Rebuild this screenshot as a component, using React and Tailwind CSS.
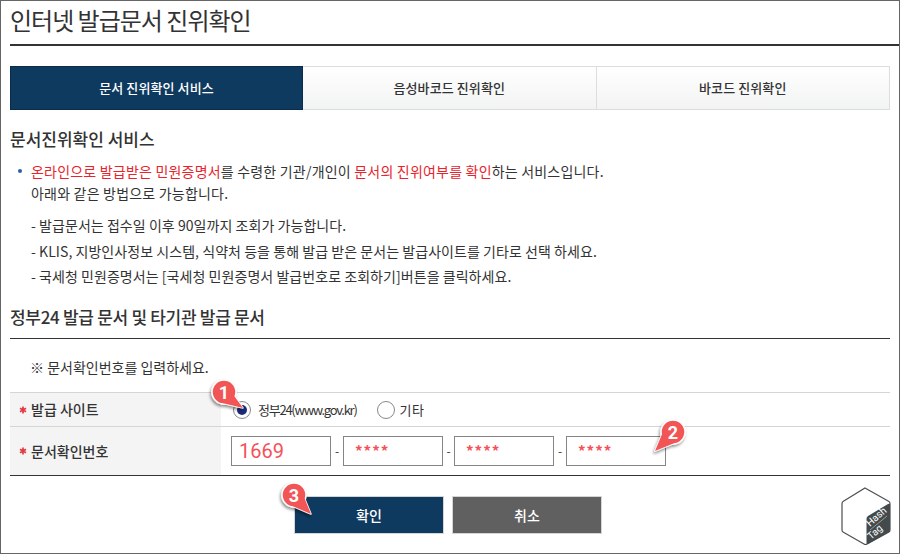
import React from 'react';

const FONT = "font-['Noto_Sans_CJK_KR','Noto_Sans',sans-serif]";

// red numbered callout with a pointer, drawn over the form
function Callout({ className, num, tip }) {
  return (
    <svg className={`absolute z-10 ${className}`} width="60" height="60" viewBox="0 0 60 60">
      <defs>
        <filter id={`shadow${num}`} x="-30%" y="-30%" width="160%" height="160%">
          <feDropShadow dx="-1" dy="2" stdDeviation="1.5" floodColor="#000" floodOpacity="0.45" />
        </filter>
      </defs>
      <g filter={`url(#shadow${num})`}>
        <path d={tip} fill="#f25555" stroke="#fff" strokeWidth="1.5" strokeLinejoin="round" />
        <circle cx="30" cy="30" r="12" fill="#f25555" stroke="#fff" strokeWidth="1.5" />
        <path d={tip} fill="#f25555" />
      </g>
      <text x="30" y="36.5" textAnchor="middle" fontSize="18" fontWeight="700" fill="#fff" fontFamily="Roboto, sans-serif">{num}</text>
    </svg>
  );
}

function Star() {
  return (
    <svg className="mr-[4px] shrink-0" width="8" height="8" viewBox="0 0 8 8">
      <path d="M4 0.5V7.5M1 2.2L7 5.8M7 2.2L1 5.8" stroke="#e33a44" strokeWidth="1.7" />
    </svg>
  );
}

function CodeInput({ children, className = '' }) {
  return (
    <div className={`w-[100px] h-[30px] border border-[#858585] bg-white flex items-center text-[#f4525a] ${className}`}>
      {children}
    </div>
  );
}

export default function App() {
  return (
    <div className={`relative w-[900px] h-[554px] overflow-hidden bg-white border border-[#666] text-[#333] ${FONT}`}>
      <h1 className="pl-[9px] h-[43px] text-[24px] leading-[36px] tracking-[-1px] text-[#333] pt-px">인터넷 발급문서 진위확인</h1>
      <div className="ml-[9px] h-[2px] bg-[#333]" />

      <div className="mx-[9px] mt-[20px] flex h-[44px] text-[13px] font-medium tracking-[0.1px]">
        <div className="w-[293px] bg-[#0f3a60] border border-[#0a2c4a] text-white flex items-center justify-center">문서 진위확인 서비스</div>
        <div className="flex-1 border border-l-0 border-[#ddd] bg-gradient-to-b from-white to-[#f2f3f3] flex items-center justify-center">음성바코드 진위확인</div>
        <div className="flex-1 border border-l-0 border-[#ddd] bg-gradient-to-b from-white to-[#f2f3f3] flex items-center justify-center">바코드 진위확인</div>
      </div>

      <h2 className="pl-[9px] mt-[17px] text-[17px] leading-[24px] font-medium">문서진위확인 서비스</h2>

      <div className="mt-[9px] pl-[30px] text-[14px] leading-[22px] tracking-[0.2px] relative">
        <span className="absolute left-[17px] top-[9px] w-[4px] h-[4px] rounded-full bg-[#2f5ea8]" />
        <p>
          <span className="text-[#e8232b]">온라인으로 발급받은 민원증명서</span>를 수령한 기관/개인이{' '}
          <span className="text-[#e8232b]">문서의 진위여부를 확인</span>하는 서비스입니다.
        </p>
        <p>아래와 같은 방법으로 가능합니다.</p>
        <div className="mt-[10px] flex flex-col gap-[3.5px] tracking-[0.05px]">
          <p>- 발급문서는 접수일 이후 90일까지 조회가 가능합니다.</p>
          <p>- KLIS, 지방인사정보 시스템, 식약처 등을 통해 발급 받은 문서는 발급사이트를 기타로 선택 하세요.</p>
          <p>- 국세청 민원증명서는 [국세청 민원증명서 발급번호로 조회하기]버튼을 클릭하세요.</p>
        </div>
      </div>

      <h2 className="pl-[9px] mt-[18px] text-[17px] leading-[24px] font-medium tracking-[-0.3px]">정부24 발급 문서 및 타기관 발급 문서</h2>
      <div className="mx-[9px] mt-[9px] h-px bg-[#333]" />

      <p className="pl-[29px] mt-[18px] text-[14px] leading-[20px]">※ 문서확인번호를 입력하세요.</p>

      <div className="mx-[9px] mt-[15px] border-t border-[#d5d5d5] border-b-[#333] border-b text-[14px]">
        <div className="flex h-[34px] border-b border-[#d5d5d5]">
          <div className="w-[211px] bg-[#f4f4f4] pl-[9px] flex items-center font-medium"><Star />발급 사이트</div>
          <div className="flex items-center pl-[12px] text-[13px]">
            <span className="w-[18px] h-[18px] rounded-full border border-[#888] flex items-center justify-center mr-[7px]">
              <span className="w-[10px] h-[10px] rounded-full bg-[#1d2b7c]" />
            </span>
            <span className="tracking-[-1.25px]">정부24(www.gov.kr)</span>
            <span className="w-[18px] h-[18px] rounded-full border border-[#888] bg-white ml-[20px] mr-[5px]" />
            <span className="tracking-[0.5px]">기타</span>
          </div>
        </div>
        <div className="flex h-[48px]">
          <div className="w-[211px] bg-[#f4f4f4] pl-[9px] flex items-center font-medium"><Star />문서확인번호</div>
          <div className="flex items-center pl-[10px]">
            <CodeInput className="pl-[7px] text-[20px] font-['Roboto',sans-serif]">1669</CodeInput>
            <span className="w-[12px] text-center text-[12px]">-</span>
            <CodeInput className="pl-[11px] text-[15px] font-bold tracking-[1px]">****</CodeInput>
            <span className="w-[11px] text-center text-[12px]">-</span>
            <CodeInput className="pl-[11px] text-[15px] font-bold tracking-[1px]">****</CodeInput>
            <span className="w-[12px] text-center text-[12px]">-</span>
            <CodeInput className="pl-[11px] text-[15px] font-bold tracking-[1px]">****</CodeInput>
          </div>
        </div>
      </div>

      <div className="mt-[20px] ml-[293px] flex gap-[8px] text-[14px] font-medium text-white">
        <div className="w-[150px] h-[38px] bg-[#0f3a60] border border-[#d5d5d5] flex items-center justify-center">확인</div>
        <div className="w-[150px] h-[38px] bg-[#606060] border border-[#d5d5d5] flex items-center justify-center">취소</div>
      </div>

      <Callout className="left-[193px] top-[361px]" num="1" tip="M24 40 L38 31 L49 46 Z" />
      <Callout className="left-[642px] top-[401px]" num="2" tip="M22 25 L34 40 L12 49 Z" />
      <Callout className="left-[263px] top-[464px]" num="3" tip="M26 40 L40 32 L47 49 Z" />

      {/* hashtag watermark */}
      <svg className="absolute left-[838px] top-[486px]" width="54" height="60" viewBox="0 0 54 60">
        <path d="M26 1 L50 14.5 Q51 15 51 17 L51 43 Q51 44.5 50 45 L28 57 Q26.5 58 25 57 L4 45 Q3 44.5 3 43 L3 17 Q3 15 4 14.5 Z" fill="#fff" stroke="#4a5052" strokeWidth="1.2" />
        <path d="M29 29 L49 17 Q51 16 51 18 L51 43 Q51 44.5 50 45 L30 56.5 Q27.5 58 27.5 56 L27.5 32 Q27.5 30 29 29 Z" fill="#434a4c" />
        <text fontSize="10" fill="#fff" fontFamily="Roboto, sans-serif" transform="translate(31 40) rotate(-42)">Hash</text>
        <path d="M31 43 L48 29" stroke="#cfd2d2" strokeWidth="0.6" />
        <text fontSize="10" fill="#fff" fontFamily="Roboto, sans-serif" transform="translate(32 53) rotate(-42)">Tag</text>
      </svg>
    </div>
  );
}
